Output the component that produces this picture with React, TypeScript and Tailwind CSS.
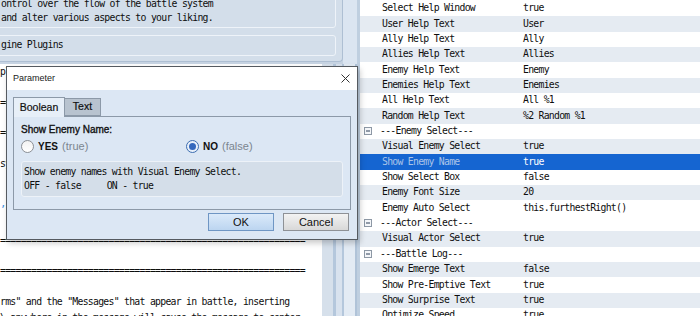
import React from 'react'

const mono = "[font-family:'DejaVu_Sans_Mono',monospace] text-[9.8px] tracking-[-0.73px]"
const ui = "[font-family:'Liberation_Sans',Arial,sans-serif]"

type Row = { name: string; value?: string; header?: boolean; shade?: boolean; selected?: boolean }

const rows: Row[] = [
  { name: 'Select Help Window', value: 'true' },
  { name: 'User Help Text', value: 'User', shade: true },
  { name: 'Ally Help Text', value: 'Ally' },
  { name: 'Allies Help Text', value: 'Allies', shade: true },
  { name: 'Enemy Help Text', value: 'Enemy' },
  { name: 'Enemies Help Text', value: 'Enemies', shade: true },
  { name: 'All Help Text', value: 'All %1' },
  { name: 'Random Help Text', value: '%2 Random %1', shade: true },
  { name: '---Enemy Select---', header: true },
  { name: 'Visual Enemy Select', value: 'true', shade: true },
  { name: 'Show Enemy Name', value: 'true', selected: true },
  { name: 'Show Select Box', value: 'false' },
  { name: 'Enemy Font Size', value: '20', shade: true },
  { name: 'Enemy Auto Select', value: 'this.furthestRight()' },
  { name: '---Actor Select---', header: true },
  { name: 'Visual Actor Select', value: 'true', shade: true },
  { name: '---Battle Log---', header: true },
  { name: 'Show Emerge Text', value: 'false', shade: true },
  { name: 'Show Pre-Emptive Text', value: 'true' },
  { name: 'Show Surprise Text', value: 'true', shade: true },
  { name: 'Optimize Speed', value: 'true' },
]

const helpLines = [
  'plugin lets you have more control over the flow of the battle',
  '',
  '============================================================',
  '',
  '============================================================',
  '',
  'system and alter various aspects to your liking.',
  '',
  '',
  '',
  '',
  '===========================================================',
  '',
  '===========================================================',
  '',
  'rms" and the "Messages" that appear in battle, inserting',
  '\\ anywhere in the message will cause the message to center',
]

const MinusBox = () => (
  <svg width="8" height="8" viewBox="0 0 8 8" className="shrink-0">
    <rect x="0.5" y="0.5" width="7" height="7" fill="#f4f6f9" stroke="#8d98a5" />
    <line x1="2" y1="4" x2="6" y2="4" stroke="#2c3e57" />
  </svg>
)

const PropertyGrid = () => (
  <div className={`flex-1 bg-white pt-[1px] ${mono} text-[#0e0e0e]`}>
    {rows.map((row) => (
      <div
        key={row.name}
        className={`flex h-[15.35px] items-center ${
          row.selected ? 'bg-[#1565d1]' : row.shade ? 'bg-[#e5ebf2]' : 'bg-white'
        }`}
      >
        {row.header ? (
          <div className="flex items-center gap-[8px] pl-[4px]">
            <MinusBox />
            <span>{row.name}</span>
          </div>
        ) : (
          <>
            <span className={`w-[163px] shrink-0 pl-[22px] ${row.selected ? 'text-[#a9c3e8]' : ''}`}>{row.name}</span>
            <span className={row.selected ? 'text-white' : ''}>{row.value}</span>
          </>
        )}
      </div>
    ))}
  </div>
)

const TopPanel = () => (
  <div className="flex h-[64px] shrink-0 bg-[#c7d4e3]">
    <div className="flex h-[62px] w-[343px] flex-col gap-[7px] rounded-br-[4px] border-r border-b border-[#aebfd3] bg-[#d3deea] pr-[6px]">
      <div className={`-mt-[10px] -ml-[10px] flex h-[38px] flex-col justify-end rounded-[3px] border border-[#eef3f9] pb-[3px] pl-[10px] ${mono} leading-[13.3px] text-[#0e0e0e]`}>
        <div>ontrol over the flow of the battle system</div>
        <div>and alter various aspects to your liking.</div>
      </div>
      <div className={`-ml-[10px] flex h-[21px] items-center rounded-[3px] border border-[#eef3f9] pl-[10px] ${mono} text-[#0e0e0e]`}>
        gine Plugins
      </div>
    </div>
    <div className="w-[14px] bg-[#dbe5f1]" />
  </div>
)

const TextArea = () => (
  <div className="flex min-h-0 flex-1">
    <div className={`w-[322px] overflow-hidden bg-white ${mono} leading-[15.35px] text-[#0e0e0e] whitespace-pre`}>
      {helpLines.map((line, i) => (
        <div key={i} className="h-[15.35px]">
          {i === 7 ? <span className="text-[#d9822b]">{' \u2019'}</span> : i === 9 ? <span className="text-[#3b8de0]">{'\u2019'}</span> : line || ' '}
        </div>
      ))}
    </div>
    <div className="flex w-[35px]">
      <div className="w-[11px] bg-[#d6e0eb]" />
      <div className="w-[3px] bg-[#b4c7dc]" />
      <div className="w-[6px] bg-[#d8e2ee]" />
      <div className="w-[2px] bg-[#b4c7dc]" />
      <div className="w-[11px] bg-[#e3ebf4]" />
      <div className="w-[2px] bg-[#b0c3d8]" />
    </div>
  </div>
)

const Radio = ({ checked }: { checked?: boolean }) => (
  <span
    className={`flex h-[13px] w-[13px] items-center justify-center rounded-full border ${
      checked ? 'border-[#3c6db0] bg-[#e8f0fa]' : 'border-[#8b8f95] bg-[linear-gradient(#f2f2f2,#ffffff)]'
    }`}
  >
    {checked && <span className="h-[7px] w-[7px] rounded-full bg-[#3468bd]" />}
  </span>
)

const Dialog = () => (
  <div className={`absolute top-[66px] left-[6px] flex h-[174px] w-[352px] flex-col border border-[#555a60] bg-[#dce7f4] shadow-[2px_3px_6px_rgba(0,0,0,0.22)] ${ui}`}>
    <div className="flex h-[23px] items-center justify-between bg-white pr-[7px] pl-[6px]">
      <span className="text-[9px] text-[#1a1a1a]">Parameter</span>
      <svg width="9" height="9" viewBox="0 0 9 9">
        <path d="M0.5 0.5 L8.5 8.5 M8.5 0.5 L0.5 8.5" stroke="#333" strokeWidth="1" />
      </svg>
    </div>
    <div className="px-[6px] pt-[7px]">
      <div className="relative z-10 flex h-[20px] items-end">
        <div className="flex h-[20px] w-[52px] items-center justify-center border border-b-0 border-[#8c99a8] bg-[#e7eff8] text-[10.5px] text-[#111] [-webkit-text-stroke:0.2px_#111]">
          Boolean
        </div>
        <div className="mb-[1px] flex h-[18px] w-[36px] items-center justify-center border border-l-0 border-[#8c99a8] bg-[#b8c3cf] text-[10.5px] text-[#111] [-webkit-text-stroke:0.2px_#111]">
          Text
        </div>
      </div>
      <div className="-mt-[1px] h-[94px] border border-[#8c99a8] px-[7px] pt-[6px]">
        <div className="h-[14px] text-[10px] leading-[14px] text-[#111] [-webkit-text-stroke:0.35px_#111]">Show Enemy Name:</div>
        <div className="mt-[1px] flex h-[16px] items-center">
          <div className="flex w-[165px] items-center gap-[4px]">
            <Radio />
            <span className="text-[10px] font-bold text-[#111]">YES</span>
            <span className="text-[11px] text-[#7b858f]">(true)</span>
          </div>
          <div className="flex items-center gap-[4px]">
            <Radio checked />
            <span className="text-[10px] font-bold text-[#111]">NO</span>
            <span className="text-[11px] text-[#7b858f]">(false)</span>
          </div>
        </div>
        <div className={`mt-[7px] h-[36px] rounded-[3px] border border-[#edf2f8] bg-[#d4dee9] pt-[3px] pl-[2px] ${mono} leading-[14px] text-[#0e0e0e] whitespace-pre`}>
          <div>Show enemy names with Visual Enemy Select.</div>
          <div>{'OFF - false     ON - true'}</div>
        </div>
      </div>
    </div>
    <div className="flex justify-end gap-[9px] pt-[3px] pr-[8px]">
      <button className="flex h-[18px] w-[66px] items-center justify-center border border-[#6f96c4] bg-[linear-gradient(#dbeafa,#bcd5f0)] text-[11px] text-[#111]">
        OK
      </button>
      <button className="flex h-[18px] w-[66px] items-center justify-center border border-[#8e9196] bg-[linear-gradient(#f3f3f3,#d8d8d8)] text-[11px] text-[#111]">
        Cancel
      </button>
    </div>
  </div>
)

export default function App() {
  return (
    <div className="relative flex h-[316px] w-[700px] overflow-hidden bg-white">
      <div className="flex h-full w-[357px] flex-col bg-[#c9d6e5]">
        <TopPanel />
        <TextArea />
      </div>
      <div className="w-[3px] bg-[#bfcfe0]" />
      <PropertyGrid />
      <Dialog />
    </div>
  )
}
